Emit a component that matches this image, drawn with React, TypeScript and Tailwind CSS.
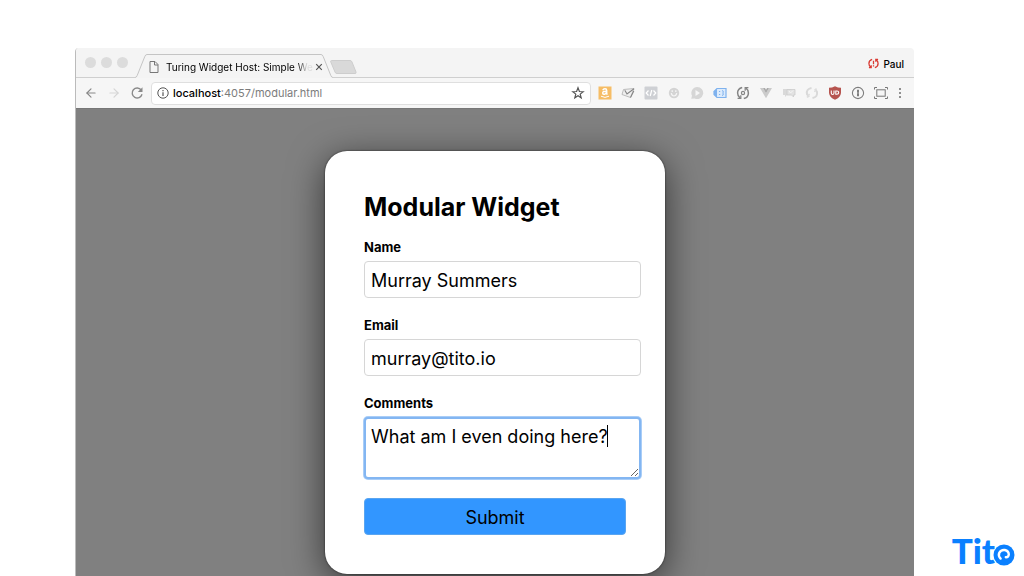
import React from "react";
import { ArrowLeft, ArrowRight } from "lucide-react";

const iconButton = "flex h-5 w-[23px] shrink-0 items-center justify-center";

function ExtensionButton({ label, children }: { label: string; children: React.ReactNode }) {
  return (
    <button type="button" aria-label={label} className={iconButton}>
      <svg viewBox="0 0 16 16" className="h-4 w-4" fill="none">
        {children}
      </svg>
    </button>
  );
}

function TabStrip() {
  return (
    <div className="flex h-[30px] items-end bg-[#f4f4f4]">
      <div className="flex h-full w-[59px] shrink-0 items-center gap-[5px] border-b border-[#cfcfcf] pl-[9px]">
        <span className="h-[11px] w-[11px] rounded-full bg-[#dcdcdc]" />
        <span className="h-[11px] w-[11px] rounded-full bg-[#dcdcdc]" />
        <span className="h-[11px] w-[11px] rounded-full bg-[#dcdcdc]" />
      </div>
      <svg viewBox="0 0 12 24" className="h-6 w-3 shrink-0" fill="none" stroke="#c4c4c4">
        <path d="M0 23.5 Q1.5 23.5 2.2 21.5 L9.8 2.5 Q10.5 .5 12 .5" />
      </svg>
      <div className="flex h-6 w-[174px] shrink-0 items-center border-t border-[#c4c4c4]">
        <svg viewBox="0 0 10 12" className="ml-[2px] h-3 w-[10px] shrink-0" fill="none" stroke="#777">
          <path d="M1 .5H6L9 3.5V11.5H1Z M5.5 .5V4H9" />
        </svg>
        <span className="ml-[7px] shrink-0 bg-linear-to-r from-black from-88% to-[#dcdcdc] to-96% bg-clip-text text-[10px] leading-4 whitespace-nowrap text-transparent">
          Turing Widget Host: Simple We
        </span>
        <button type="button" aria-label="Close tab" className="ml-[2px] flex h-3 w-2 shrink-0 items-center justify-center">
          <svg viewBox="0 0 8 8" className="h-2 w-2" stroke="#555" strokeWidth="1.2">
            <path d="M1.2 1.2L6.8 6.8M6.8 1.2L1.2 6.8" />
          </svg>
        </button>
      </div>
      <svg viewBox="0 0 12 24" className="h-6 w-3 shrink-0" fill="none" stroke="#c4c4c4">
        <path d="M0 .5 Q1.5 .5 2.2 2.5 L9.8 21.5 Q10.5 23.5 12 23.5" />
      </svg>
      <div className="flex h-full flex-1 items-center justify-between border-b border-[#cfcfcf] pr-[10px]">
        <button type="button" aria-label="New tab" className="mt-2 -ml-[3px]">
          <svg viewBox="0 0 27 14" className="h-[14px] w-[27px]" fill="#d9d9d9" stroke="#cdcdcd">
            <path d="M1.5 .5H20Q21.5 .5 22 2L26 12Q26.5 13.5 25 13.5H7Q5.5 13.5 5 12L.8 2Q.3 .5 1.5 .5Z" />
          </svg>
        </button>
        <button type="button" className="mt-[2px] flex items-center gap-1 text-[10px] leading-4 font-medium text-black">
          <svg viewBox="0 0 12 12" className="h-[11px] w-[11px]" fill="none" stroke="#d93a32" strokeWidth="1.4">
            <path d="M4.5 1.5Q1 2.5 1 6Q1 8.5 3 10M1 10.5H3.5V8M7.5 10.5Q11 9.5 11 6Q11 3.5 9 2M11 1.5H8.5V4M6 3V6.7M6 8V9.3" />
          </svg>
          Paul
        </button>
      </div>
    </div>
  );
}

function Toolbar() {
  return (
    <div className="flex h-[30px] items-center bg-[#f6f6f6] pr-[6px] pl-[3px]">
      <button type="button" aria-label="Back" className={iconButton}>
        <ArrowLeft className="h-[14px] w-[14px] text-[#888]" strokeWidth={2} />
      </button>
      <button type="button" aria-label="Forward" className={iconButton}>
        <ArrowRight className="h-[14px] w-[14px] text-[#d5d5d5]" strokeWidth={2} />
      </button>
      <button type="button" aria-label="Reload" className={iconButton}>
        <svg viewBox="0 0 14 14" className="h-[14px] w-[14px]" fill="none" stroke="#8a8a8a" strokeWidth="1.4">
          <path d="M11.2 4A5 5 0 1 0 12 8.3" />
          <path d="M12.5 1.2V6H7.8Z" fill="#8a8a8a" stroke="none" />
        </svg>
      </button>
      <div className="ml-[3px] flex h-[23px] flex-1 items-center rounded-sm border border-[#dfdfdf] bg-white pr-1 pl-[5px]">
        <svg viewBox="0 0 12 12" className="h-3 w-3 shrink-0" fill="none" stroke="#555">
          <circle cx="6" cy="6" r="5.2" />
          <path d="M6 5.2V9M6 3V4.2" strokeWidth="1.2" />
        </svg>
        <a href="#modular" className="ml-1 flex-1 text-[11px] leading-4 text-[#7c7c7c]">
          <span className="font-medium text-black">localhost</span>:4057/modular.html
        </a>
        <button type="button" aria-label="Bookmark this page" className="flex h-4 w-4 items-center justify-center">
          <svg viewBox="0 0 14 14" className="h-[14px] w-[14px]" fill="none" stroke="#555" strokeWidth="1.2">
            <path d="M7 1.8L8.4 5.5L12.2 5.7L9.2 8.1L10.2 11.8L7 9.7L3.8 11.8L4.8 8.1L1.8 5.7L5.6 5.5Z" />
          </svg>
        </button>
      </div>
      <div className="ml-[2px] flex">
        <ExtensionButton label="Shopping assistant">
          <rect x="1.5" y="1.5" width="13" height="13" fill="#f6bd66" />
          <path d="M5.8 5.2Q6.3 3.8 8 3.8Q9.7 3.8 9.7 5.5V8.2Q9.7 9 10.4 9.6M9.6 6.3Q5.6 6.1 5.7 8.1Q5.9 9.5 7.6 9.3Q9.4 9 9.6 7" stroke="#fff" strokeWidth="1.5" />
          <path d="M4 11.2Q8 13.6 12 11.2" stroke="#fff" />
        </ExtensionButton>
        <ExtensionButton label="Mail checker">
          <path d="M3.5 4.5L14 3.5L10.5 12.5L2 9.5Z" fill="#efefef" stroke="#b5b5b5" strokeWidth=".9" />
          <path d="M4.8 5.2L7 9L14 3.8M10.5 12.5L13.8 6" stroke="#858585" strokeWidth="1.1" />
        </ExtensionButton>
        <ExtensionButton label="Code inspector">
          <rect x="1.5" y="1.5" width="13" height="13" rx="1" fill="#ced0d4" />
          <path d="M5.5 5.5L3.2 8L5.5 10.5M10.5 5.5L12.8 8L10.5 10.5M8.8 5L7.2 11" stroke="#fff" strokeWidth="1.2" />
        </ExtensionButton>
        <ExtensionButton label="Smiley">
          <circle cx="8" cy="8" r="5.2" fill="#d4d4d4" />
          <path d="M5.3 8.2Q5.8 11 8 11Q10.2 11 10.7 8.2" stroke="#f6f6f6" strokeWidth="1.2" />
          <path d="M6.2 5.3V7M9.8 5.3V7" stroke="#f6f6f6" strokeWidth="1.2" />
        </ExtensionButton>
        <ExtensionButton label="Media player">
          <path d="M8.2 2A6 6 0 1 1 5.6 13.4L2.2 13.8L3 10.8A6 6 0 0 1 8.2 2Z" fill="#d6d6d6" />
          <path d="M6.5 5L11 8L6.5 11Z" fill="#f6f6f6" />
        </ExtensionButton>
        <ExtensionButton label="Tags">
          <path d="M5 3.5H14V12.5H5L2 9.5V6.5Z" fill="#dcebfc" stroke="#7fb2ee" strokeWidth="1.2" />
          <path d="M2 6.5L5 3.5V12.5L2 9.5Z" fill="#7fb2ee" />
          <path d="M7 6.5H8.2M7 9.5H8.2M10 5.5Q12 5.5 11 8Q12 10.5 10 10.5" stroke="#7fb2ee" strokeWidth="1" />
        </ExtensionButton>
        <ExtensionButton label="Sync">
          <path d="M7.2 2.4Q2.6 3.4 2.6 8Q2.6 11 5 12.8M8.8 13.6Q13.4 12.6 13.4 8Q13.4 5 11 3.2" stroke="#858585" strokeWidth="1.5" />
          <path d="M2.6 13.3H5.8V10.2M13.4 2.7H10.2V5.8" stroke="#858585" strokeWidth="1.3" />
          <circle cx="8" cy="8" r="1.6" stroke="#858585" strokeWidth="1.2" />
        </ExtensionButton>
        <ExtensionButton label="Vue devtools">
          <path d="M2 3H5L8 8.2L11 3H14L8 13.2Z" fill="#cbcbcb" />
          <path d="M5 3H7L8 4.8L9 3H11L8 8.2Z" fill="#aaa" />
        </ExtensionButton>
        <ExtensionButton label="Chat">
          <path d="M2 4H10.5V10H6L4 12V10H2Z" fill="#d9d9d9" />
          <path d="M6 4.5H14V10H12.5V12L10.5 10H6Z" fill="#e2e2e2" stroke="#cdcdcd" strokeWidth=".8" />
          <path d="M8 6L9.5 8L12 5.5" stroke="#f6f6f6" />
        </ExtensionButton>
        <ExtensionButton label="Links">
          <path d="M7.5 3Q2 4 3 9L5 12M8.5 13Q14 12 13 7L11 4" stroke="#d9d9d9" strokeWidth="2" />
          <path d="M5.5 9L3 12.5M10.5 7L12.5 3.5" stroke="#dedede" strokeWidth="1.5" />
        </ExtensionButton>
        <ExtensionButton label="Ad blocker">
          <path d="M8 1.3Q11 2.8 14 2.8V8Q13.5 12.5 8 14.7Q2.5 12.5 2 8V2.8Q5 2.8 8 1.3Z" fill="#b6544f" />
          <path d="M4.3 5.5V8Q4.3 9.5 5.6 9.5Q7 9.5 7 8V5.5M8.8 6H10Q11.7 6 11.7 7.5Q11.7 9.2 10 9.2H8.8Z" stroke="#fff" strokeWidth="1.1" />
        </ExtensionButton>
        <ExtensionButton label="Password manager">
          <circle cx="8" cy="8" r="5.6" stroke="#7d7d7d" strokeWidth="1.1" />
          <path d="M7 4.8H9V7.3L8.5 8L9 8.7V11.2H7V8.7L7.5 8L7 7.3Z" fill="#7d7d7d" />
        </ExtensionButton>
        <ExtensionButton label="Screen capture">
          <rect x="3.8" y="4.8" width="8.4" height="6.4" stroke="#777" />
          <path d="M1.5 4.5V2.5H4M12 2.5H14.5V4.5M14.5 11.5V13.5H12M4 13.5H1.5V11.5" stroke="#777" />
        </ExtensionButton>
        <button type="button" aria-label="Menu" className="flex h-5 w-4 items-center justify-center">
          <svg viewBox="0 0 4 12" className="h-3 w-1" fill="#777">
            <circle cx="2" cy="2" r="1.1" />
            <circle cx="2" cy="6" r="1.1" />
            <circle cx="2" cy="10" r="1.1" />
          </svg>
        </button>
      </div>
    </div>
  );
}

const labelClass = "mb-[6px] block text-[13px] leading-4 font-bold";
const fieldClass =
  "block h-[37px] w-full rounded-sm border border-[#d6d6d6] bg-white px-[6px] pt-px text-lg text-black outline-none";

function WidgetForm() {
  return (
    <form
      onSubmit={(event) => event.preventDefault()}
      className="w-[340px] rounded-[22px] bg-white pt-[39px] pr-6 pb-[39px] pl-[39px] text-black shadow-[0_8px_36px_rgba(0,0,0,0.6),0_0_2px_rgba(0,0,0,0.7)]"
    >
      <h1 className="mb-[15px] text-[25px] leading-[34px] font-bold">Modular Widget</h1>
      <div className="mb-[19px]">
        <label htmlFor="name" className={labelClass}>Name</label>
        <input id="name" type="text" defaultValue="Murray Summers" className={fieldClass} />
      </div>
      <div className="mb-[19px]">
        <label htmlFor="email" className={labelClass}>Email</label>
        <input id="email" type="email" defaultValue="murray@tito.io" className={fieldClass} />
      </div>
      <div className="mb-[19px]">
        <label htmlFor="comments" className={labelClass}>Comments</label>
        <div className="relative">
          <textarea
            id="comments"
            defaultValue="What am I even doing here?"
            className="block h-[62px] w-full resize rounded-sm border-2 border-[#83b6f2] bg-white px-[5px] py-[6px] text-lg leading-6 text-black ring-1 ring-[#a9cdf7] outline-none"
          />
          <span className="absolute top-2 left-[243px] h-[22px] w-px bg-black" />
        </div>
      </div>
      <button type="submit" className="block h-[37px] w-[262px] rounded-sm border border-[#5aa5f0] bg-[#3296ff] pt-[2px] text-lg text-black">
        Submit
      </button>
    </form>
  );
}

function TitoLogo() {
  return (
    <a href="#tito" aria-label="Tito" className="absolute right-[9px] bottom-[10px] flex items-end font-['Lato',sans-serif] text-[35px] leading-8 font-black text-[#0a80ff]">
      Tit
      <svg viewBox="0 0 22 22" className="-ml-[2px] h-[22px] w-[22px]" fill="none" strokeLinecap="round">
        <circle cx="11" cy="11" r="10.5" fill="#0a80ff" />
        <path d="M7.6 14.6Q5 12 6.2 9Q8 5.5 11.8 6Q15.8 7 15.8 10.6Q15.4 13.4 12.8 13.2" stroke="#fff" strokeWidth="2.4" />
      </svg>
    </a>
  );
}

export default function App() {
  return (
    <div className="relative flex h-screen overflow-hidden bg-white pt-12 pr-[110px] pl-[75px] font-['Inter',sans-serif]">
      <main className="flex flex-1 flex-col overflow-hidden rounded-t border-l border-[#bbb]">
        <TabStrip />
        <Toolbar />
        <div className="flex flex-1 items-start justify-center overflow-hidden border-t border-[#777] bg-[#808080] pt-[42px]">
          <WidgetForm />
        </div>
      </main>
      <TitoLogo />
    </div>
  );
}
